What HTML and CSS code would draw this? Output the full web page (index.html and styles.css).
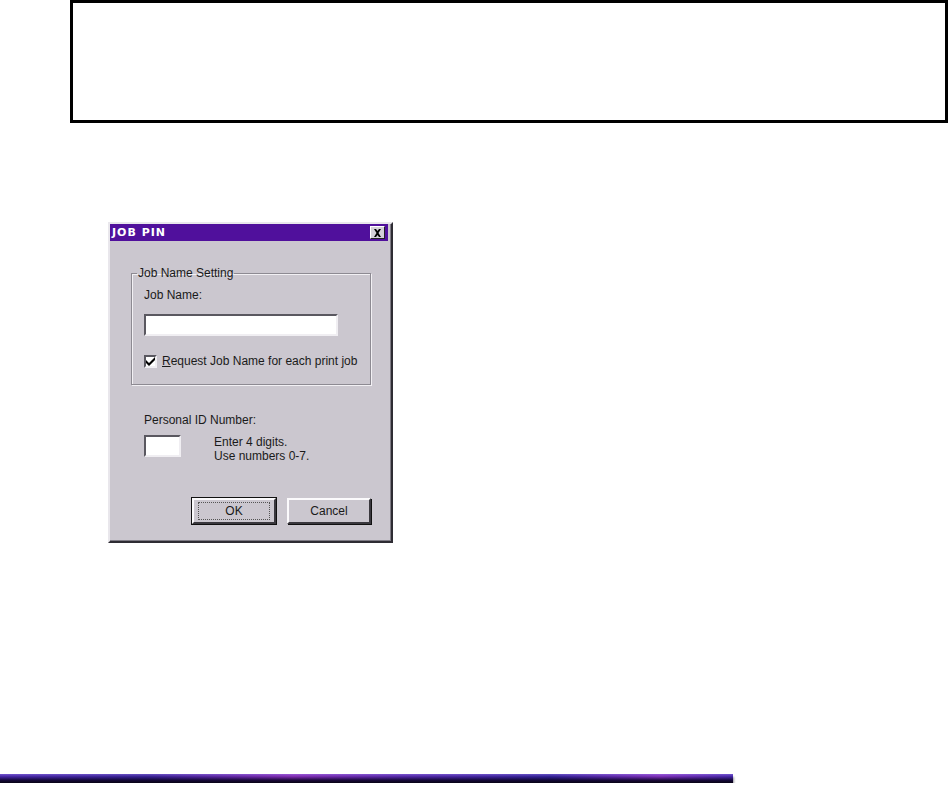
FILE: index.html
```html
<!DOCTYPE html>
<html lang="en">
<head>
<meta charset="UTF-8">
<title>Job PIN</title>
<link rel="stylesheet" href="styles.css">
</head>
<body>
<div class="frame"></div>

<div class="dialog">
    <div class="titlebar">
        <span class="title">JOB PIN</span>
        <span class="close">
            <svg width="9" height="8" viewBox="0 0 9 8"><path d="M1 0h2l1.5 2L6 0h2L5.5 4 8 8H6L4.5 6 3 8H1l2.5-4z" fill="#000"/></svg>
        </span>
    </div>
    <div class="content">
        <fieldset class="group">
            <legend>Job Name Setting</legend>
            <div class="label">Job Name:</div>
            <div class="field wide"></div>
            <div class="check-row">
                <span class="checkbox">
                    <svg width="9" height="9" viewBox="0 0 9 9"><path d="M0 3v3l3 3 6-6V0L3 6z" fill="#000"/></svg>
                </span>
                <span><u>R</u>equest Job Name for each print job</span>
            </div>
        </fieldset>

        <div class="label pin-label">Personal ID Number:</div>
        <div class="pin-row">
            <div class="field short"></div>
            <div class="hint">Enter 4 digits.<br>Use numbers 0-7.</div>
        </div>

        <div class="buttons">
            <div class="btn default"><span>OK</span></div>
            <div class="btn">Cancel</div>
        </div>
    </div>
</div>

<div class="rule"></div>
</body>
</html>
```

FILE: styles.css
```css
body {
    margin: 0;
    background: #fff;
    font-family: "Liberation Sans", Arial, sans-serif;
}
.frame {
    margin-left: 70px;
    width: 872px;
    height: 117px;
    border: 3px solid #000;
}
.dialog {
    margin: 99px 0 0 108px;
    width: 285px;
    height: 321px;
    box-sizing: border-box;
    background: #cbc7cf;
    border: 2px solid;
    border-color: #e9e7ec #2e2c33 #2e2c33 #e9e7ec;
    box-shadow: inset -1px -1px 0 #7f7c85;
    font-size: 12px;
    color: #1a1a1a;
}
.titlebar {
    height: 17px;
    margin-right: 3px;
    background: #50109c;
    display: flex;
    align-items: center;
    justify-content: space-between;
    padding: 0 3px 0 2px;
}
.title {
    color: #fff;
    font-family: "DejaVu Sans", sans-serif;
    font-weight: bold;
    font-size: 11px;
    letter-spacing: 1px;
}
.close {
    width: 15px;
    height: 13px;
    box-sizing: border-box;
    background: #d4d0d8;
    border: 1px solid;
    border-color: #fff #222 #222 #fff;
    display: flex;
    align-items: center;
    justify-content: center;
}
.content {
    padding: 25px 0 0 21px;
}
.group {
    margin: 0;
    padding: 8px 0 0 12px;
    width: 240px;
    height: 119px;
    box-sizing: border-box;
    border: 1px solid #8d8a92;
    box-shadow: 1px 1px 0 #f2f0f4, inset 1px 1px 0 #f2f0f4;
}
.group legend {
    padding: 0 1px;
    margin-left: -7px;
    font-size: 12px;
}
.label {
    height: 14px;
    line-height: 14px;
}
.field {
    background: #fff;
    box-sizing: border-box;
    border: 2px solid;
    border-color: #5a5860 #f0eef2 #f0eef2 #5a5860;
}
.wide {
    width: 194px;
    height: 22px;
    margin-top: 12px;
}
.check-row {
    display: flex;
    align-items: center;
    gap: 5px;
    margin-top: 18px;
}
.checkbox {
    width: 13px;
    height: 13px;
    box-sizing: border-box;
    background: #fff;
    border: 2px solid;
    border-color: #5a5860 #f0eef2 #f0eef2 #5a5860;
    display: flex;
    align-items: center;
    justify-content: center;
}
.pin-label {
    margin: 28px 0 0 13px;
}
.pin-row {
    display: flex;
    margin: 8px 0 0 13px;
}
.short {
    width: 37px;
    height: 22px;
}
.hint {
    margin: 0 0 0 33px;
    line-height: 14px;
}
.buttons {
    display: flex;
    gap: 11px;
    margin: 35px 0 0 61px;
}
.btn {
    width: 84px;
    height: 26px;
    box-sizing: border-box;
    border: 2px solid;
    border-color: #fbfafc #3a383e #3a383e #fbfafc;
    box-shadow: 1px 1px 0 #111;
    display: flex;
    align-items: center;
    justify-content: center;
    font-size: 12px;
}
.btn.default {
    outline: 1px solid #111;
}
.btn.default span {
    border: 1px dotted #555;
    padding: 1px 26px;
}
.rule {
    margin-top: 231px;
    width: 733px;
    height: 9px;
    background:
        linear-gradient(to bottom, rgba(150, 120, 240, 0.55) 0, rgba(60, 30, 150, 0.35) 30%, rgba(15, 5, 45, 0.92) 70%, #080314 100%),
        linear-gradient(to right, #4a2aa8 0, #30208a 20%, #a030b8 40%, #5a2aa8 55%, #28208e 75%, #9a34c0 90%, #4428a8 100%);
    box-shadow: 1px 3px 2px #9a98a0;
}
```
